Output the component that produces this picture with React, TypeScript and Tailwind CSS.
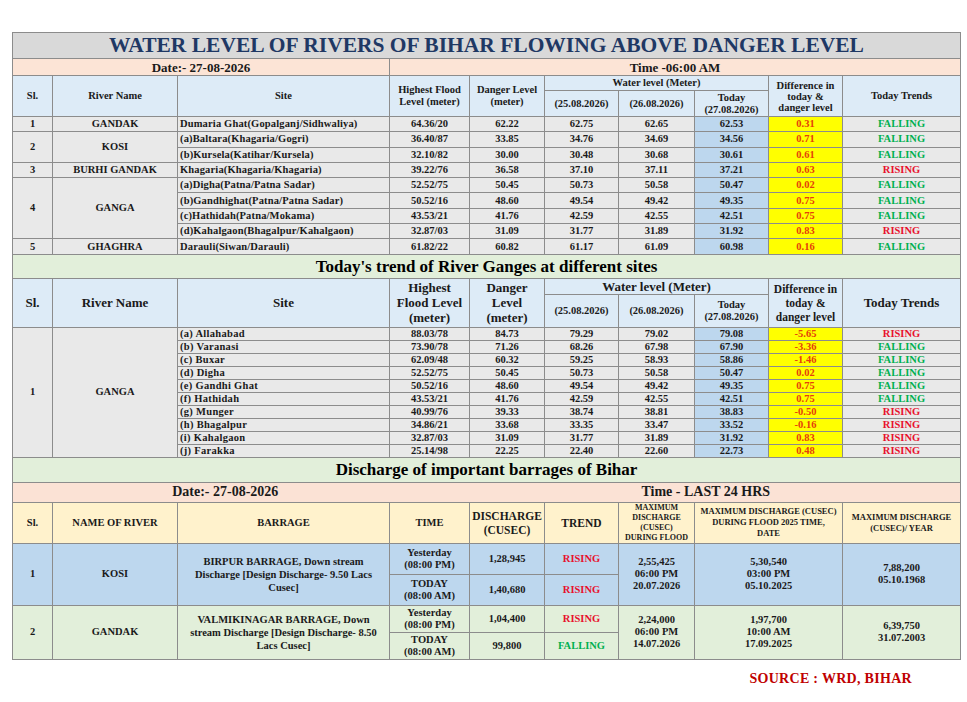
import React from "react"

const cell = "border border-[#8c8c8c] p-0"

const t1 = [
    { sl: "1", river: "GANDAK", sites: [["Dumaria Ghat(Gopalganj/Sidhwaliya)", "64.36/20", "62.22", "62.75", "62.65", "62.53", "0.31", "FALLING"]] },
    {
        sl: "2", river: "KOSI", sites: [
            ["(a)Baltara(Khagaria/Gogri)", "36.40/87", "33.85", "34.76", "34.69", "34.56", "0.71", "FALLING"],
            ["(b)Kursela(Katihar/Kursela)", "32.10/82", "30.00", "30.48", "30.68", "30.61", "0.61", "FALLING"],
        ]
    },
    { sl: "3", river: "BURHI GANDAK", sites: [["Khagaria(Khagaria/Khagaria)", "39.22/76", "36.58", "37.10", "37.11", "37.21", "0.63", "RISING"]] },
    {
        sl: "4", river: "GANGA", sites: [
            ["(a)Digha(Patna/Patna Sadar)", "52.52/75", "50.45", "50.73", "50.58", "50.47", "0.02", "FALLING"],
            ["(b)Gandhighat(Patna/Patna Sadar)", "50.52/16", "48.60", "49.54", "49.42", "49.35", "0.75", "FALLING"],
            ["(c)Hathidah(Patna/Mokama)", "43.53/21", "41.76", "42.59", "42.55", "42.51", "0.75", "FALLING"],
            ["(d)Kahalgaon(Bhagalpur/Kahalgaon)", "32.87/03", "31.09", "31.77", "31.89", "31.92", "0.83", "RISING"],
        ]
    },
    { sl: "5", river: "GHAGHRA", sites: [["Darauli(Siwan/Darauli)", "61.82/22", "60.82", "61.17", "61.09", "60.98", "0.16", "FALLING"]] },
]

const t2 = [
    ["(a) Allahabad", "88.03/78", "84.73", "79.29", "79.02", "79.08", "-5.65", "RISING"],
    ["(b) Varanasi", "73.90/78", "71.26", "68.26", "67.98", "67.90", "-3.36", "FALLING"],
    ["(c) Buxar", "62.09/48", "60.32", "59.25", "58.93", "58.86", "-1.46", "FALLING"],
    ["(d) Digha", "52.52/75", "50.45", "50.73", "50.58", "50.47", "0.02", "FALLING"],
    ["(e) Gandhi Ghat", "50.52/16", "48.60", "49.54", "49.42", "49.35", "0.75", "FALLING"],
    ["(f) Hathidah", "43.53/21", "41.76", "42.59", "42.55", "42.51", "0.75", "FALLING"],
    ["(g) Munger", "40.99/76", "39.33", "38.74", "38.81", "38.83", "-0.50", "RISING"],
    ["(h) Bhagalpur", "34.86/21", "33.68", "33.35", "33.47", "33.52", "-0.16", "RISING"],
    ["(i) Kahalgaon", "32.87/03", "31.09", "31.77", "31.89", "31.92", "0.83", "RISING"],
    ["(j) Farakka", "25.14/98", "22.25", "22.40", "22.60", "22.73", "0.48", "RISING"],
]

const barrages = [
    {
        sl: "1", river: "KOSI", bg: "bg-[#bdd7ee]", h: "h-[31px]", pad: "px-[16px]",
        barrage: "BIRPUR BARRAGE, Down stream Discharge [Design Discharge- 9.50 Lacs Cusec]",
        rows: [["Yesterday", "(08:00 PM)", "1,28,945", "RISING"], ["TODAY", "(08:00 AM)", "1,40,680", "RISING"]],
        max: ["2,55,425", "06:00 PM", "20.07.2026"], max25: ["5,30,540", "03:00 PM", "05.10.2025"], year: ["7,88,200", "05.10.1968"],
    },
    {
        sl: "2", river: "GANDAK", bg: "bg-[#e2efda]", h: "h-[27px]", pad: "px-[10px]",
        barrage: "VALMIKINAGAR BARRAGE, Down stream Discharge [Design Discharge- 8.50 Lacs Cusec]",
        rows: [["Yesterday", "(08:00 PM)", "1,04,400", "RISING"], ["TODAY", "(08:00 AM)", "99,800", "FALLING"]],
        max: ["2,24,000", "06:00 PM", "14.07.2026"], max25: ["1,97,700", "10:00 AM", "17.09.2025"], year: ["6,39,750", "31.07.2003"],
    },
]

const trendColor = (t: string) => t === "RISING" ? "text-[#e8112d]" : "text-[#00b050]"

const Cols = () => (
    <colgroup>
        <col className="w-[40px]" />
        <col className="w-[125px]" />
        <col className="w-[212px]" />
        <col className="w-[80px]" />
        <col className="w-[75px]" />
        <col className="w-[74px]" />
        <col className="w-[76px]" />
        <col className="w-[74px]" />
        <col className="w-[74px]" />
        <col className="w-[118px]" />
    </colgroup>
)

const App = () => {
    return (
        <div className=" w-[967px] h-[702px] bg-white pt-[32px] pl-[12px] font-['Liberation_Serif',serif] font-bold text-[#1a1a1a] ">
            <table className=" table-fixed border-collapse w-[948px] text-center ">
                <Cols />
                <tbody>
                    <tr className=" h-[26px] bg-[#d9d9d9] ">
                        <td colSpan={10} className={`${cell} text-[21.5px] leading-none text-[#1f3864]`}>WATER LEVEL OF RIVERS OF BIHAR FLOWING ABOVE DANGER LEVEL</td>
                    </tr>
                    <tr className=" h-[17px] bg-[#fce4d6] text-[13px] leading-none ">
                        <td colSpan={3} className={cell}>Date:- 27-08-2026</td>
                        <td colSpan={7} className={cell}>Time -06:00 AM</td>
                    </tr>
                    <tr className=" h-[15px] bg-[#ddebf7] text-[10.5px] leading-[12px] ">
                        <td rowSpan={2} className={cell}>Sl.</td>
                        <td rowSpan={2} className={cell}>River Name</td>
                        <td rowSpan={2} className={cell}>Site</td>
                        <td rowSpan={2} className={cell}>Highest Flood<br />Level (meter)</td>
                        <td rowSpan={2} className={cell}>Danger Level<br />(meter)</td>
                        <td colSpan={3} className={cell}>Water level (Meter)</td>
                        <td rowSpan={2} className={`${cell} leading-[11px]`}>Difference in<br />today &amp;<br />danger level</td>
                        <td rowSpan={2} className={cell}>Today Trends</td>
                    </tr>
                    <tr className=" h-[26px] bg-[#ddebf7] text-[10.5px] leading-[12px] ">
                        <td className={cell}>(25.08.2026)</td>
                        <td className={cell}>(26.08.2026)</td>
                        <td className={cell}>Today<br />(27.08.2026)</td>
                    </tr>
                    {
                        t1.map((grp) => grp.sites.map((s, i) => (
                            <tr key={grp.sl + i} className=" h-[15.3px] bg-[#e9e9e9] text-[10.5px] leading-[12px] ">
                                {i === 0 && <td rowSpan={grp.sites.length} className={cell}>{grp.sl}</td>}
                                {i === 0 && <td rowSpan={grp.sites.length} className={cell}>{grp.river}</td>}
                                <td className={`${cell} text-left pl-[2px] whitespace-nowrap tracking-[0.15px]`}>{s[0]}</td>
                                <td className={cell}>{s[1]}</td>
                                <td className={cell}>{s[2]}</td>
                                <td className={cell}>{s[3]}</td>
                                <td className={cell}>{s[4]}</td>
                                <td className={`${cell} bg-[#bdd7ee]`}>{s[5]}</td>
                                <td className={`${cell} bg-[#ffff00] text-[#e5400a]`}>{s[6]}</td>
                                <td className={`${cell} ${trendColor(s[7])}`}>{s[7]}</td>
                            </tr>
                        )))
                    }
                    <tr className=" h-[24px] bg-[#e2efda] ">
                        <td colSpan={10} className={`${cell} text-[17px] leading-none text-black`}>Today's trend of River Ganges at different sites</td>
                    </tr>
                    <tr className=" h-[16px] bg-[#ddebf7] text-[13px] leading-[15px] ">
                        <td rowSpan={2} className={cell}>Sl.</td>
                        <td rowSpan={2} className={cell}>River Name</td>
                        <td rowSpan={2} className={cell}>Site</td>
                        <td rowSpan={2} className={cell}>Highest<br />Flood Level<br />(meter)</td>
                        <td rowSpan={2} className={cell}>Danger<br />Level<br />(meter)</td>
                        <td colSpan={3} className={cell}>Water level (Meter)</td>
                        <td rowSpan={2} className={`${cell} text-[11.5px] leading-[14px]`}>Difference in<br />today &amp;<br />danger level</td>
                        <td rowSpan={2} className={cell}>Today Trends</td>
                    </tr>
                    <tr className=" h-[33px] bg-[#ddebf7] text-[10.5px] leading-[12px] ">
                        <td className={cell}>(25.08.2026)</td>
                        <td className={cell}>(26.08.2026)</td>
                        <td className={cell}>Today<br />(27.08.2026)</td>
                    </tr>
                    {
                        t2.map((s, i) => (
                            <tr key={i} className=" h-[13px] bg-[#e9e9e9] text-[10.5px] leading-[12px] ">
                                {i === 0 && <td rowSpan={t2.length} className={cell}>1</td>}
                                {i === 0 && <td rowSpan={t2.length} className={cell}>GANGA</td>}
                                <td className={`${cell} text-left pl-[2px] tracking-[0.3px]`}>{s[0]}</td>
                                <td className={cell}>{s[1]}</td>
                                <td className={cell}>{s[2]}</td>
                                <td className={cell}>{s[3]}</td>
                                <td className={cell}>{s[4]}</td>
                                <td className={`${cell} bg-[#bdd7ee]`}>{s[5]}</td>
                                <td className={`${cell} bg-[#ffff00] text-[#e5400a]`}>{s[6]}</td>
                                <td className={`${cell} ${trendColor(s[7])}`}>{s[7]}</td>
                            </tr>
                        ))
                    }
                    <tr className=" h-[25px] bg-[#e2efda] ">
                        <td colSpan={10} className={`${cell} text-[17px] leading-none text-black`}>Discharge of important barrages of Bihar</td>
                    </tr>
                    <tr className=" h-[20px] bg-[#fbe2d5] text-[14px] leading-none ">
                        <td colSpan={4} className={`${cell} border-r-0 pr-[32px]`}>Date:- 27-08-2026</td>
                        <td colSpan={6} className={`${cell} border-l-0 pr-[18px]`}>Time - LAST 24 HRS</td>
                    </tr>
                    <tr className=" h-[41px] bg-[#fff2cc] text-[10.5px] leading-[12px] ">
                        <td className={cell}>Sl.</td>
                        <td className={cell}>NAME OF RIVER</td>
                        <td className={cell}>BARRAGE</td>
                        <td className={cell}>TIME</td>
                        <td className={`${cell} text-[11.5px] leading-[14px]`}>DISCHARGE<br />(CUSEC)</td>
                        <td className={`${cell} text-[11.5px]`}>TREND</td>
                        <td className={`${cell} text-[8px] leading-[10px]`}>MAXIMUM<br />DISCHARGE<br />(CUSEC)<br />DURING FLOOD</td>
                        <td colSpan={2} className={`${cell} text-[8.5px] leading-[11px]`}>MAXIMUM DISCHARGE (CUSEC)<br />DURING FLOOD 2025 TIME,<br />DATE</td>
                        <td className={`${cell} text-[8.5px] leading-[11px]`}>MAXIMUM DISCHARGE<br />(CUSEC)/ YEAR</td>
                    </tr>
                    {
                        barrages.map((b) => b.rows.map((r, i) => (
                            <tr key={b.sl + i} className={` ${b.h} ${b.bg} text-[10.5px] leading-[12px] `}>
                                {i === 0 && <td rowSpan={2} className={cell}>{b.sl}</td>}
                                {i === 0 && <td rowSpan={2} className={cell}>{b.river}</td>}
                                {i === 0 && <td rowSpan={2} className={`${cell} ${b.pad} leading-[13px]`}>{b.barrage}</td>}
                                <td className={cell}>{r[0]}<br />{r[1]}</td>
                                <td className={cell}>{r[2]}</td>
                                <td className={`${cell} ${trendColor(r[3])}`}>{r[3]}</td>
                                {i === 0 && <td rowSpan={2} className={cell}>{b.max[0]}<br />{b.max[1]}<br />{b.max[2]}</td>}
                                {i === 0 && <td rowSpan={2} colSpan={2} className={cell}>{b.max25[0]}<br />{b.max25[1]}<br />{b.max25[2]}</td>}
                                {i === 0 && <td rowSpan={2} className={cell}>{b.year[0]}<br />{b.year[1]}</td>}
                            </tr>
                        )))
                    }
                </tbody>
            </table>
            <div className=" flex justify-end w-[900px] pt-[8px] ">
                <span className=" text-[14px] text-[#c00000] tracking-[0.3px] ">SOURCE : WRD, BIHAR</span>
            </div>
        </div>
    )
}

export default App
